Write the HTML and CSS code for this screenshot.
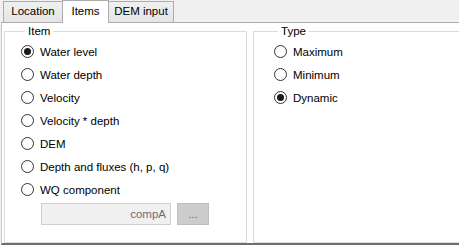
FILE: index.html
```html
<!DOCTYPE html>
<html lang="en">
<head>
    <meta charset="UTF-8">
    <title>Items</title>
    <link rel="stylesheet" href="styles.css">
</head>
<body>
    <div class="window">
        <div class="tabs">
            <div class="tab tab-location">Location</div>
            <div class="tab tab-items selected">Items</div>
            <div class="tab tab-dem">DEM input</div>
        </div>
        <div class="pane">
            <fieldset class="group group-item">
                <legend>Item</legend>
                <div class="radio-row"><span class="radio checked"></span>Water level</div>
                <div class="radio-row"><span class="radio"></span>Water depth</div>
                <div class="radio-row"><span class="radio"></span>Velocity</div>
                <div class="radio-row"><span class="radio"></span>Velocity * depth</div>
                <div class="radio-row"><span class="radio"></span>DEM</div>
                <div class="radio-row"><span class="radio"></span>Depth and fluxes (h, p, q)</div>
                <div class="radio-row"><span class="radio"></span>WQ component</div>
                <div class="component-row">
                    <div class="text-field">compA</div>
                    <div class="browse-button">...</div>
                </div>
            </fieldset>
            <fieldset class="group group-type">
                <legend>Type</legend>
                <div class="radio-row"><span class="radio"></span>Maximum</div>
                <div class="radio-row"><span class="radio"></span>Minimum</div>
                <div class="radio-row"><span class="radio checked"></span>Dynamic</div>
            </fieldset>
        </div>
    </div>
</body>
</html>
```

FILE: styles.css
```css
html, body {
    margin: 0;
    padding: 0;
}

body {
    font-family: "Liberation Sans", Arial, sans-serif;
    font-size: 11.5px;
    color: #000;
    background-color: #f0f0f0;
    width: 459px;
    height: 245px;
    overflow: hidden;
}

.window {
    width: 459px;
    height: 245px;
}

.tabs {
    display: flex;
    align-items: flex-end;
    height: 22px;
    padding-left: 3px;
}

.tab {
    box-sizing: border-box;
    height: 21px;
    line-height: 19px;
    border: 1px solid #acacac;
    border-bottom: none;
    background: linear-gradient(#f0f0f0, #e5e5e5);
    text-align: center;
    position: relative;
}

.tab-location {
    width: 60px;
}

.tab-items {
    width: 47px;
    margin-left: -1px;
}

.tab-dem {
    width: 66px;
    margin-left: -1px;
}

.tab.selected {
    height: 23px;
    line-height: 21px;
    background: #fff;
    z-index: 1;
    margin-bottom: -1px;
}

.pane {
    box-sizing: border-box;
    height: 223px;
    margin-left: 1px;
    background: #fff;
    border-top: 1px solid #adadad;
    border-left: 1px solid #c8c8c8;
    border-bottom: 2px solid #6e6e6e;
    display: flex;
    gap: 6px;
    padding: 2px 0 0 2px;
}

.group {
    margin: 0;
    padding: 0 0 0 16px;
    border: 1px solid #dcdcdc;
    height: 218px;
    box-sizing: border-box;
    min-width: 0;
}

.group legend {
    padding: 0 3px;
    margin-left: 4px;
    line-height: 13px;
}

.group-item {
    width: 243px;
}

.group-type {
    flex: 1;
    padding-left: 20px;
    border-right: none;
}

.radio-row {
    display: flex;
    align-items: center;
    height: 23px;
}

.group .radio-row:first-of-type {
    margin-top: 2px;
}

.radio {
    box-sizing: border-box;
    width: 13px;
    height: 13px;
    border: 1px solid #333;
    border-radius: 50%;
    background: #fff;
    margin-right: 6px;
    display: flex;
    align-items: center;
    justify-content: center;
}

.radio.checked::after {
    content: "";
    width: 7px;
    height: 7px;
    border-radius: 50%;
    background: #1a1a1a;
}

.component-row {
    display: flex;
    gap: 6px;
    margin-top: 2px;
    padding-left: 20px;
}

.text-field {
    box-sizing: border-box;
    width: 130px;
    height: 22px;
    line-height: 20px;
    border: 1px solid #cfcfcf;
    background: #f0f0f0;
    color: #6d6d6d;
    text-align: right;
    padding-right: 4px;
}

.browse-button {
    box-sizing: border-box;
    width: 32px;
    height: 22px;
    line-height: 20px;
    border: 1px solid #bfbfbf;
    background: #cccccc;
    color: #6d6d8d;
    text-align: center;
}
```
